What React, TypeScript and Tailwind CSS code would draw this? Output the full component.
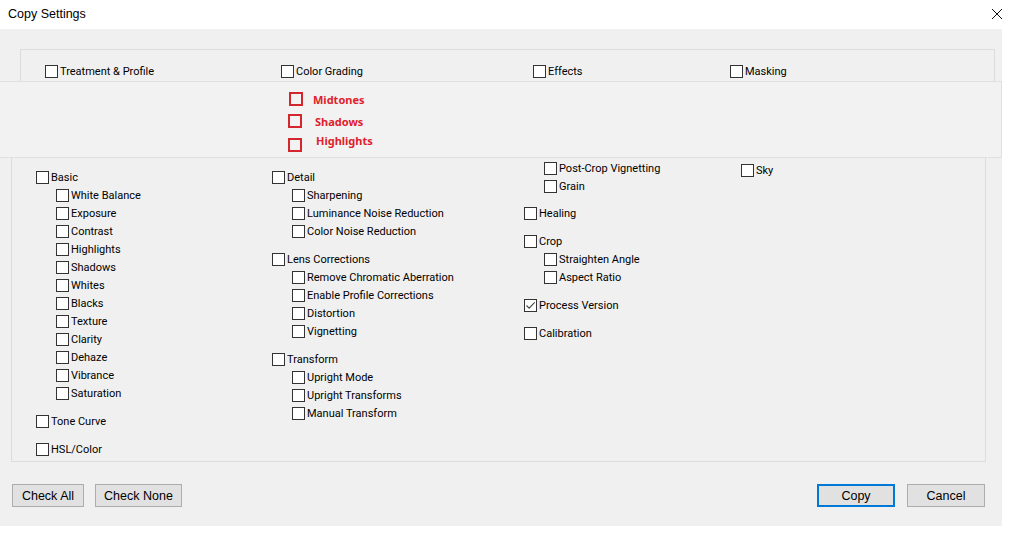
import React from "react";

const FONT = { fontFamily: '"Liberation Sans", Arial, sans-serif' };
const LABEL_FONT = { fontFamily: 'Roboto, "Liberation Sans", Arial, sans-serif' };
const RED_FONT = { fontFamily: '"Noto Sans", Arial, sans-serif' };

function Box({ checked }: { checked?: boolean }) {
  return (
    <span className="flex h-[13px] w-[13px] shrink-0 items-center justify-center border border-[#333333] bg-white">
      {checked && (
        <svg width="11" height="11" viewBox="0 0 11 11">
          <path d="M1.5 5.5 L4.2 8.2 L9.7 2.4" fill="none" stroke="#444" strokeWidth="1.1" />
        </svg>
      )}
    </span>
  );
}

function Cb({
  label,
  checked,
  sub,
  className = "",
}: {
  label: string;
  checked?: boolean;
  sub?: boolean;
  className?: string;
}) {
  return (
    <div className={`flex h-[18px] items-center ${sub ? "pl-[20px]" : ""} ${className}`}>
      <Box checked={checked} />
      <span className="ml-[2px] mt-[1px] whitespace-nowrap text-[11px] leading-none text-black" style={LABEL_FONT}>
        {label}
      </span>
    </div>
  );
}

function Btn({ label, w, primary }: { label: string; w: string; primary?: boolean }) {
  return (
    <div
      className={`flex h-[23px] items-center justify-center bg-[#e1e1e1] pt-[1px] text-[12.5px] text-black ${w} ${
        primary ? "border-2 border-[#0078d7]" : "border border-[#adadad]"
      }`}
    >
      {label}
    </div>
  );
}

export default function App() {
  return (
    <div className="relative h-[538px] w-[1010px] overflow-hidden bg-white" style={FONT}>
      {/* title bar */}
      <div className="flex h-[29px] items-center justify-between pl-[8px] pr-[7px]">
        <span className="text-[12.5px] text-black">Copy Settings</span>
        <svg width="12" height="12" viewBox="0 0 12 12" className="mb-[2px]">
          <path d="M1 1 L11 11 M11 1 L1 11" stroke="#111" strokeWidth="1" fill="none" />
        </svg>
      </div>

      {/* body */}
      <div className="flex h-[497px] w-[1002px] flex-col bg-[#f0f0f0]">
        {/* top group */}
        <div className="ml-[20px] mt-[20px] h-[70px] w-[975px] border border-[#dcdcdc]">
          <div className="flex pl-[24px] pt-[12px]">
            <div className="w-[236px]">
              <Cb label="Treatment & Profile" />
            </div>
            <div className="w-[252px]">
              <Cb label="Color Grading" />
            </div>
            <div className="w-[197px]">
              <Cb label="Effects" />
            </div>
            <div>
              <Cb label="Masking" />
            </div>
          </div>
        </div>

        {/* lower group */}
        <div className="ml-[11px] mt-[30px] flex h-[313px] w-[975px] border border-[#dcdcdc] pl-[24px]">
          <div className="w-[236px] pt-[18px]">
            <Cb label="Basic" />
            <Cb sub label="White Balance" />
            <Cb sub label="Exposure" />
            <Cb sub label="Contrast" />
            <Cb sub label="Highlights" />
            <Cb sub label="Shadows" />
            <Cb sub label="Whites" />
            <Cb sub label="Blacks" />
            <Cb sub label="Texture" />
            <Cb sub label="Clarity" />
            <Cb sub label="Dehaze" />
            <Cb sub label="Vibrance" />
            <Cb sub label="Saturation" />
            <Cb label="Tone Curve" className="mt-[10px]" />
            <Cb label="HSL/Color" className="mt-[10px]" />
          </div>
          <div className="w-[252px] pt-[18px]">
            <Cb label="Detail" />
            <Cb sub label="Sharpening" />
            <Cb sub label="Luminance Noise Reduction" />
            <Cb sub label="Color Noise Reduction" />
            <Cb label="Lens Corrections" className="mt-[10px]" />
            <Cb sub label="Remove Chromatic Aberration" />
            <Cb sub label="Enable Profile Corrections" />
            <Cb sub label="Distortion" />
            <Cb sub label="Vignetting" />
            <Cb label="Transform" className="mt-[10px]" />
            <Cb sub label="Upright Mode" />
            <Cb sub label="Upright Transforms" />
            <Cb sub label="Manual Transform" />
          </div>
          <div className="w-[217px] pt-[9px]">
            <Cb sub label="Post-Crop Vignetting" />
            <Cb sub label="Grain" />
            <Cb label="Healing" className="mt-[9px]" />
            <Cb label="Crop" className="mt-[10px]" />
            <Cb sub label="Straighten Angle" />
            <Cb sub label="Aspect Ratio" />
            <Cb label="Process Version" checked className="mt-[10px]" />
            <Cb label="Calibration" className="mt-[10px]" />
          </div>
          <div className="pt-[11px]">
            <Cb label="Sky" />
          </div>
        </div>

        {/* buttons */}
        <div className="mt-[22px] flex pl-[12px] pr-[17px]">
          <Btn label="Check All" w="w-[72px]" />
          <div className="ml-[11px]">
            <Btn label="Check None" w="w-[87px]" />
          </div>
          <div className="flex-1" />
          <Btn label="Copy" w="w-[78px]" primary />
          <div className="ml-[12px]">
            <Btn label="Cancel" w="w-[78px]" />
          </div>
        </div>
      </div>

      {/* overlay band with colour grading sub-options */}
      <div
        className="absolute left-0 top-[81px] h-[77px] w-[1002px] border-b border-r border-t border-[#e0e0e0] bg-[#f2f2f2] pt-[10px]"
        style={RED_FONT}
      >
        <div className="flex items-center pl-[289px]">
          <span className="h-[14px] w-[14px] border-2 border-[#d4262d]" />
          <span className="ml-[10px] mt-[1px] text-[11px] font-bold leading-none text-[#e0202a]">Midtones</span>
        </div>
        <div className="mt-[8px] flex items-center pl-[288px]">
          <span className="h-[14px] w-[14px] border-2 border-[#d4262d]" />
          <span className="ml-[13px] text-[11px] font-bold leading-none text-[#e0202a]">Shadows</span>
        </div>
        <div className="mt-[10px] flex items-start pl-[288px]">
          <span className="h-[14px] w-[14px] shrink-0 border-2 border-[#d4262d]" />
          <span className="-mt-[4px] ml-[14px] text-[11px] font-bold leading-[14px] text-[#e0202a]">Highlights</span>
        </div>
      </div>
    </div>
  );
}
